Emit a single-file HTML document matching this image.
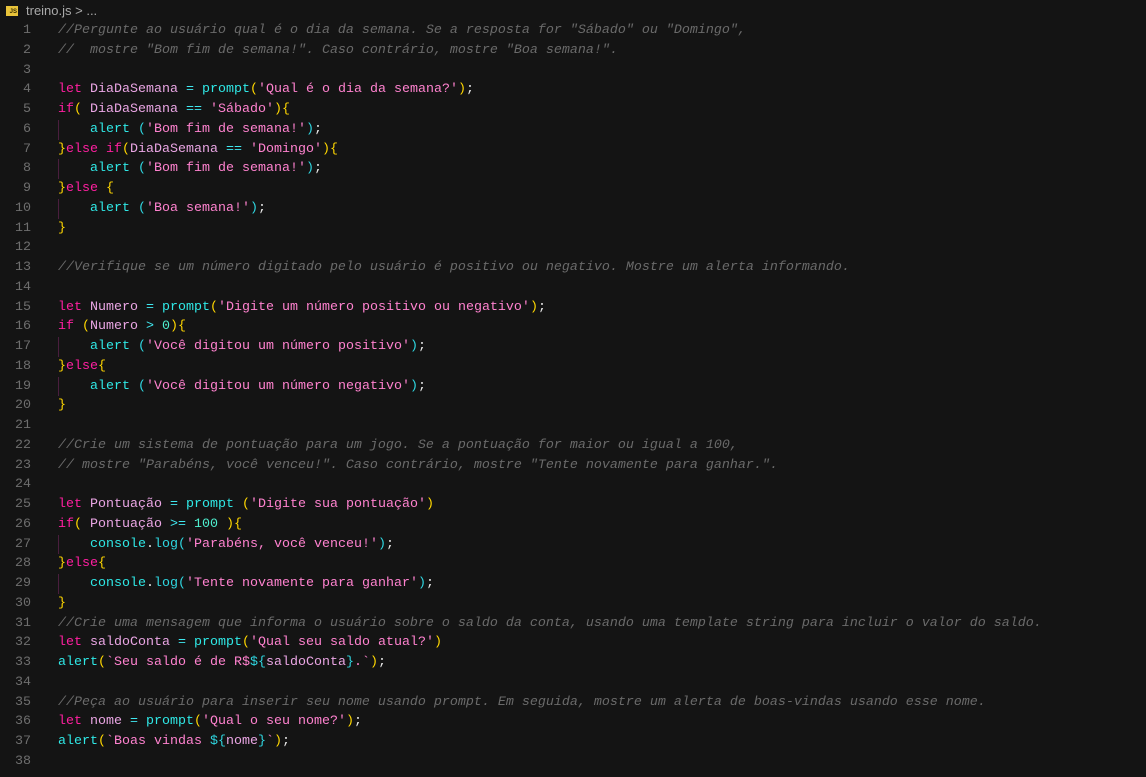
<!DOCTYPE html>
<html><head><meta charset="utf-8">
<style>
html,body{margin:0;padding:0;background:#141414;width:1146px;height:777px;overflow:hidden;}
.bc{position:absolute;left:0;top:0;height:21px;width:1146px;font-family:"Liberation Sans",sans-serif;font-size:13px;color:#a9a9a9;}
.bc .ic{position:absolute;left:6px;top:6px;width:12px;height:10px;background:#e8c33a;color:#3a2e00;font-size:6px;font-weight:bold;line-height:12px;text-align:right;padding-right:1px;box-sizing:border-box}
.bc .t{position:absolute;left:26px;top:3px;}
.ed{position:absolute;left:0;top:21px;font-family:"Liberation Mono",monospace;font-size:13.33px;}
.l{position:relative;height:19.75px;line-height:19.75px;white-space:pre;}
.n{position:absolute;left:0;width:31px;text-align:right;color:#6e6e6e;}
.c0{position:absolute;left:58px;color:#e8e8e8;}
.g{position:absolute;left:58px;top:0;width:1px;height:19.75px;background:#4a1e3e;}
.k{color:#ff1fa0}.v{color:#eaa6e4}.f{color:#2fe8e6}.s{color:#ff82cf}.c{color:#6a6a6a;font-style:italic}
.y{color:#ffd700}.b{color:#2fd6e0}.o{color:#40e8f0}.m{color:#4ff0d0}.w{color:#e6e6e6}
</style></head><body>
<div class="bc"><div class="ic">JS</div><div class="t">treino.js &gt; ...</div></div>
<div class="ed">
<div class="l"><span class="n">1</span><span class="c0 c">//Pergunte ao usuário qual é o dia da semana. Se a resposta for "Sábado" ou "Domingo",</span></div>
<div class="l"><span class="n">2</span><span class="c0 c">//  mostre "Bom fim de semana!". Caso contrário, mostre "Boa semana!".</span></div>
<div class="l"><span class="n">3</span></div>
<div class="l"><span class="n">4</span><span class="c0"><span class="k">let</span> <span class="v">DiaDaSemana</span> <span class="o">=</span> <span class="f">prompt</span><span class="y">(</span><span class="s">'Qual é o dia da semana?'</span><span class="y">)</span>;</span></div>
<div class="l"><span class="n">5</span><span class="c0"><span class="k">if</span><span class="y">(</span> <span class="v">DiaDaSemana</span> <span class="o">==</span> <span class="s">'Sábado'</span><span class="y">){</span></span></div>
<div class="l"><span class="n">6</span><span class="g"></span><span class="c0">    <span class="f">alert</span> <span class="b">(</span><span class="s">'Bom fim de semana!'</span><span class="b">)</span>;</span></div>
<div class="l"><span class="n">7</span><span class="c0"><span class="y">}</span><span class="k">else if</span><span class="y">(</span><span class="v">DiaDaSemana</span> <span class="o">==</span> <span class="s">'Domingo'</span><span class="y">){</span></span></div>
<div class="l"><span class="n">8</span><span class="g"></span><span class="c0">    <span class="f">alert</span> <span class="b">(</span><span class="s">'Bom fim de semana!'</span><span class="b">)</span>;</span></div>
<div class="l"><span class="n">9</span><span class="c0"><span class="y">}</span><span class="k">else</span> <span class="y">{</span></span></div>
<div class="l"><span class="n">10</span><span class="g"></span><span class="c0">    <span class="f">alert</span> <span class="b">(</span><span class="s">'Boa semana!'</span><span class="b">)</span>;</span></div>
<div class="l"><span class="n">11</span><span class="c0"><span class="y">}</span></span></div>
<div class="l"><span class="n">12</span></div>
<div class="l"><span class="n">13</span><span class="c0 c">//Verifique se um número digitado pelo usuário é positivo ou negativo. Mostre um alerta informando.</span></div>
<div class="l"><span class="n">14</span></div>
<div class="l"><span class="n">15</span><span class="c0"><span class="k">let</span> <span class="v">Numero</span> <span class="o">=</span> <span class="f">prompt</span><span class="y">(</span><span class="s">'Digite um número positivo ou negativo'</span><span class="y">)</span>;</span></div>
<div class="l"><span class="n">16</span><span class="c0"><span class="k">if</span> <span class="y">(</span><span class="v">Numero</span> <span class="o">&gt;</span> <span class="m">0</span><span class="y">){</span></span></div>
<div class="l"><span class="n">17</span><span class="g"></span><span class="c0">    <span class="f">alert</span> <span class="b">(</span><span class="s">'Você digitou um número positivo'</span><span class="b">)</span>;</span></div>
<div class="l"><span class="n">18</span><span class="c0"><span class="y">}</span><span class="k">else</span><span class="y">{</span></span></div>
<div class="l"><span class="n">19</span><span class="g"></span><span class="c0">    <span class="f">alert</span> <span class="b">(</span><span class="s">'Você digitou um número negativo'</span><span class="b">)</span>;</span></div>
<div class="l"><span class="n">20</span><span class="c0"><span class="y">}</span></span></div>
<div class="l"><span class="n">21</span></div>
<div class="l"><span class="n">22</span><span class="c0 c">//Crie um sistema de pontuação para um jogo. Se a pontuação for maior ou igual a 100,</span></div>
<div class="l"><span class="n">23</span><span class="c0 c">// mostre "Parabéns, você venceu!". Caso contrário, mostre "Tente novamente para ganhar.".</span></div>
<div class="l"><span class="n">24</span></div>
<div class="l"><span class="n">25</span><span class="c0"><span class="k">let</span> <span class="v">Pontuação</span> <span class="o">=</span> <span class="f">prompt</span> <span class="y">(</span><span class="s">'Digite sua pontuação'</span><span class="y">)</span></span></div>
<div class="l"><span class="n">26</span><span class="c0"><span class="k">if</span><span class="y">(</span> <span class="v">Pontuação</span> <span class="o">&gt;=</span> <span class="m">100</span> <span class="y">){</span></span></div>
<div class="l"><span class="n">27</span><span class="g"></span><span class="c0">    <span class="f">console</span>.<span class="b">log(</span><span class="s">'Parabéns, você venceu!'</span><span class="b">)</span>;</span></div>
<div class="l"><span class="n">28</span><span class="c0"><span class="y">}</span><span class="k">else</span><span class="y">{</span></span></div>
<div class="l"><span class="n">29</span><span class="g"></span><span class="c0">    <span class="f">console</span>.<span class="b">log(</span><span class="s">'Tente novamente para ganhar'</span><span class="b">)</span>;</span></div>
<div class="l"><span class="n">30</span><span class="c0"><span class="y">}</span></span></div>
<div class="l"><span class="n">31</span><span class="c0 c">//Crie uma mensagem que informa o usuário sobre o saldo da conta, usando uma template string para incluir o valor do saldo.</span></div>
<div class="l"><span class="n">32</span><span class="c0"><span class="k">let</span> <span class="v">saldoConta</span> <span class="o">=</span> <span class="f">prompt</span><span class="y">(</span><span class="s">'Qual seu saldo atual?'</span><span class="y">)</span></span></div>
<div class="l"><span class="n">33</span><span class="c0"><span class="f">alert</span><span class="y">(</span><span class="s">`Seu saldo é de R$</span><span class="b">${</span><span class="v">saldoConta</span><span class="b">}</span><span class="s">.`</span><span class="y">)</span>;</span></div>
<div class="l"><span class="n">34</span></div>
<div class="l"><span class="n">35</span><span class="c0 c">//Peça ao usuário para inserir seu nome usando prompt. Em seguida, mostre um alerta de boas-vindas usando esse nome.</span></div>
<div class="l"><span class="n">36</span><span class="c0"><span class="k">let</span> <span class="v">nome</span> <span class="o">=</span> <span class="f">prompt</span><span class="y">(</span><span class="s">'Qual o seu nome?'</span><span class="y">)</span>;</span></div>
<div class="l"><span class="n">37</span><span class="c0"><span class="f">alert</span><span class="y">(</span><span class="s">`Boas vindas </span><span class="b">${</span><span class="v">nome</span><span class="b">}</span><span class="s">`</span><span class="y">)</span>;</span></div>
<div class="l"><span class="n">38</span></div>
</div>
</body></html>
